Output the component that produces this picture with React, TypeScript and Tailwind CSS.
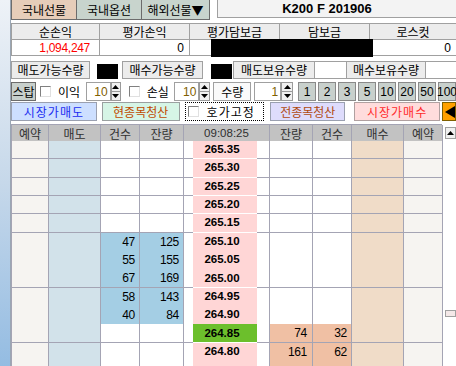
import React from 'react';

const ko = "font-['Noto_Sans_CJK_KR',sans-serif]";
const num = "font-['Liberation_Sans',Arial,sans-serif]";

type Row = { p: string; ac?: number; aq?: number; bq?: number; bc?: number; cur?: boolean; bidFill?: boolean };

const rows: Row[] = [
  { p: '265.35' },
  { p: '265.30' },
  { p: '265.25' },
  { p: '265.20' },
  { p: '265.15' },
  { p: '265.10', ac: 47, aq: 125 },
  { p: '265.05', ac: 55, aq: 155 },
  { p: '265.00', ac: 67, aq: 169 },
  { p: '264.95', ac: 58, aq: 143 },
  { p: '264.90', ac: 40, aq: 84 },
  { p: '264.85', bq: 74, bc: 32, cur: true },
  { p: '264.80', bq: 161, bc: 62 },
  { p: '', bidFill: true },
];

const Check = () => (
  <div className="w-[11px] h-[11px] bg-white border border-t-[#808080] border-l-[#808080] border-r-[#e0e0e0] border-b-[#e0e0e0]" />
);

const Spin = ({ w }: { w: string }) => (
  <div className={`${w} h-[19px] flex flex-col`}>
    <div className="flex-1 bg-[#f0f0f0] border border-[#9a9a9a] flex items-center justify-center">
      <svg width="7" height="4" viewBox="0 0 7 4"><path d="M3.5 0L7 4H0z" fill="#000" /></svg>
    </div>
    <div className="flex-1 bg-[#f0f0f0] border border-t-0 border-[#9a9a9a] flex items-center justify-center">
      <svg width="7" height="4" viewBox="0 0 7 4"><path d="M0 0h7L3.5 4z" fill="#000" /></svg>
    </div>
  </div>
);

const NumInput = ({ v, w }: { v: string; w: string }) => (
  <div className={`${w} h-[19px] bg-white border border-[#a0a0a0] flex items-center justify-end pr-[2px] text-[12px] text-[#806000] ${num}`}>
    {v}
  </div>
);

export default function App() {
  return (
    <div className="w-[456px] h-[366px] overflow-hidden flex bg-white">
      <div className="w-[11px] h-full bg-linear-to-b from-[#eef2f7] via-[#c6d8ea] to-[#94bce2] border-r border-[#9aa6b4]" />
      <div className="w-[445px] flex flex-col">
        {/* tabs */}
        <div className={`h-[20px] flex text-[12px] ${ko}`}>
          <div className="w-[66px] bg-[#e6cdb9] border-x border-b border-[#6c6c6c] flex items-center justify-center">국내선물</div>
          <div className="w-[65px] bg-[#c8d4cd] border-r border-b border-[#6c6c6c] flex items-center justify-center">국내옵션</div>
          <div className="w-[68px] bg-[#c8d4cd] border-r border-b border-[#6c6c6c] flex items-center justify-center">해외선물▼</div>
          <div className={`ml-[7px] flex-1 h-[18px] bg-[#f3f3f3] border-l border-b border-[#a0a0a0] flex items-center justify-center pr-[20px] text-[13px] font-bold ${num}`}>
            K200 F 201906
          </div>
        </div>

        {/* pnl table */}
        <div className={`mt-[3px] border-y border-[#a0a0a0] text-[12px] ${ko}`}>
          <div className="h-[16px] flex bg-[#ececec] border-b border-[#a0a0a0]">
            <div className="w-[89px] border-x border-[#a0a0a0] flex items-center justify-center">순손익</div>
            <div className="w-[90px] border-r border-[#a0a0a0] flex items-center justify-center">평가손익</div>
            <div className="w-[90px] border-r border-[#a0a0a0] flex items-center justify-center">평가담보금</div>
            <div className="w-[90px] border-r border-[#a0a0a0] flex items-center justify-center">담보금</div>
            <div className="flex-1 flex items-center justify-center">로스컷</div>
          </div>
          <div className={`h-[15px] flex bg-white ${num}`}>
            <div className="w-[89px] border-x border-[#a0a0a0] flex items-center justify-end pr-[9px] text-[#ff0000] tracking-[-0.3px]">1,094,247</div>
            <div className="w-[90px] border-r border-[#a0a0a0] flex items-center justify-end pr-[5px]">0</div>
            <div className="w-[21px]" />
            <div className="w-[162px] h-[18px] -mt-[1px] bg-black" />
            <div className="flex-1 flex items-center justify-end pr-[5px]">0</div>
          </div>
        </div>

        {/* qty labels */}
        <div className={`mt-[5px] h-[18px] flex items-stretch text-[12px] ${ko}`}>
          <div className="w-[79px] bg-[#ececec] border border-[#a0a0a0] flex items-center justify-center">매도가능수량</div>
          <div className="w-[32px] flex items-end pl-[7px]"><div className="w-[21px] h-[15px] bg-black" /></div>
          <div className="w-[81px] bg-[#ececec] border border-[#a0a0a0] flex items-center justify-center">매수가능수량</div>
          <div className="w-[30px] flex items-end pl-[8px]"><div className="w-[21px] h-[15px] bg-black" /></div>
          <div className="w-[82px] bg-[#ececec] border border-[#a0a0a0] flex items-center justify-center">매도보유수량</div>
          <div className="w-[31px] bg-white border-y border-[#a0a0a0]" />
          <div className="w-[80px] bg-[#ececec] border border-[#a0a0a0] flex items-center justify-center">매수보유수량</div>
          <div className="flex-1 bg-white border-y border-[#a0a0a0]" />
        </div>

        {/* stop row */}
        <div className={`mt-[3px] h-[19px] flex items-center text-[12px] ${ko}`}>
          <div className="w-[25px] h-[19px] bg-[#c8d0cc] border border-[#6c6c6c] flex items-center justify-center">스탑</div>
          <div className="ml-[4px]"><Check /></div>
          <div className="ml-[7px] w-[28px]">이익</div>
          <NumInput v="10" w="w-[25px]" />
          <Spin w="w-[10px]" />
          <div className="ml-[8px]"><Check /></div>
          <div className="ml-[7px] w-[27px]">손실</div>
          <NumInput v="10" w="w-[26px]" />
          <Spin w="w-[11px]" />
          <div className="ml-[3px] w-[38px] h-[19px] bg-[#fafafa] border border-[#a0a0a0] flex items-center justify-center">수량</div>
          <div className="ml-[3px]" />
          <NumInput v="1" w="w-[27px]" />
          <Spin w="w-[12px]" />
          <div className={`ml-[5px] flex gap-[2px] ${num}`}>
            {['1', '2', '3', '5', '10', '20', '50', '100'].map((b) => (
              <div key={b} className="w-[18px] h-[19px] shrink-0 bg-[#c8d0cc] border border-[#8a8a8a] flex items-center justify-center text-[12px]">
                {b}
              </div>
            ))}
          </div>
        </div>

        {/* order buttons */}
        <div className={`mt-[1px] h-[19px] flex items-stretch text-[12px] ${ko}`}>
          <div className="w-[86px] bg-[#cddfff] border border-[#9aa0b0] text-[#1a2cf0] flex items-center justify-center tracking-[1px]">시장가매도</div>
          <div className="ml-[5px] w-[78px] bg-[#d6f5e6] border border-[#9aa0a0] text-[#c04a00] flex items-center justify-center">현종목청산</div>
          <div className="ml-[5px] w-[80px] bg-white border border-dotted border-black flex items-center pl-[2px]">
            <Check />
            <span className="ml-[8px] tracking-[1px]">호가고정</span>
          </div>
          <div className="ml-[6px] w-[75px] bg-[#dedcfc] border border-[#9aa0b0] text-[#b04a10] flex items-center justify-center">전종목청산</div>
          <div className="ml-[9px] w-[86px] bg-[#ffdcdc] border border-[#b0a0a0] text-[#ff2a2a] flex items-center justify-center tracking-[1px]">시장가매수</div>
          <div className="ml-[2px] flex-1 bg-[#ffa000] border border-[#806000] flex items-center pl-[2px]">
            <svg width="10" height="12" viewBox="0 0 10 12"><path d="M0 6L10 0V12z" fill="#000" /></svg>
          </div>
        </div>

        {/* hoga grid */}
        <div className="mt-[3px] flex flex-1 min-h-0">
          <div className="w-[431px] border-l border-t border-[#a4a4b4]">
            <div className={`h-[16px] grid grid-cols-[37px_52px_39px_44px_9px_64px_13px_43px_39px_52px_39px] bg-[#c2c2c2] text-[12px] text-[#303030] ${ko}`}>
              <div className="border-r border-b border-[#a4a4b4] flex items-center justify-center">예약</div>
              <div className="border-r border-b border-[#a4a4b4] flex items-center justify-center">매도</div>
              <div className="border-r border-b border-[#a4a4b4] flex items-center justify-center">건수</div>
              <div className="border-r border-b border-[#a4a4b4] flex items-center justify-center">잔량</div>
              <div className={`col-span-3 border-r border-b border-[#a4a4b4] flex items-center justify-center text-[11.5px] ${num}`}>09:08:25</div>
              <div className="border-r border-b border-[#a4a4b4] flex items-center justify-center">잔량</div>
              <div className="border-r border-b border-[#a4a4b4] flex items-center justify-center">건수</div>
              <div className="border-r border-b border-[#a4a4b4] flex items-center justify-center">매수</div>
              <div className="border-r border-b border-[#a4a4b4] flex items-center justify-center">예약</div>
            </div>
            {rows.map((r, i) => {
              const bb = i === 9 ? 'border-b-black' : 'border-b-[#a4a4b4]';
              const askFill = r.ac !== undefined ? 'bg-[#a4cee4]' : 'bg-white';
              const bidFill = r.bq !== undefined || r.bidFill ? 'bg-[#f0c0a4]' : 'bg-white';
              const priceBg = r.cur ? 'bg-[#6cbf2c]' : 'bg-[#ffd6d6]';
              const priceB = i === 9 ? 'border-b-black' : 'border-b-white';
              return (
                <div key={i} className={`h-[18.33px] grid grid-cols-[37px_52px_39px_44px_9px_64px_13px_43px_39px_52px_39px] text-[12px] ${num}`}>
                  <div className={`bg-[#f6f4f1] border-r border-r-[#a4a4b4] border-b ${bb}`} />
                  <div className={`bg-[#d2e2ea] border-r border-r-[#a4a4b4] border-b ${bb}`} />
                  <div className={`${askFill} border-r border-r-[#a4a4b4] border-b ${bb} flex items-center justify-end pr-[4px] tracking-[-0.3px]`}>{r.ac}</div>
                  <div className={`${askFill} border-r border-r-[#a4a4b4] border-b ${bb} flex items-center justify-end pr-[4px] tracking-[-0.3px]`}>{r.aq}</div>
                  <div className={`bg-white border-b ${bb}`} />
                  <div className={`${priceBg} border-b ${priceB} flex items-center justify-center pr-[6px] text-[11.5px] font-bold text-black`}>{r.p}</div>
                  <div className={`bg-white border-r border-r-[#a4a4b4] border-b ${bb}`} />
                  <div className={`${bidFill} border-r border-r-[#a4a4b4] border-b ${bb} flex items-center justify-end pr-[5px] tracking-[-0.3px]`}>{r.bq}</div>
                  <div className={`${bidFill} border-r border-r-[#a4a4b4] border-b ${bb} flex items-center justify-end pr-[4px] tracking-[-0.3px]`}>{r.bc}</div>
                  <div className={`bg-[#f0dcc8] border-r border-r-[#a4a4b4] border-b ${bb}`} />
                  <div className={`bg-[#f6f4f1] border-r border-r-[#a4a4b4] border-b ${bb}`} />
                </div>
              );
            })}
          </div>
          <div className="w-[14px] flex flex-col items-start pl-[3px]">
            <div className="mt-[3px] w-[11px] h-[12px] bg-[#f0f0f0] border border-[#a0a0a0] flex items-center justify-center">
              <svg width="7" height="4" viewBox="0 0 7 4"><path d="M3.5 0L7 4H0z" fill="#000" /></svg>
            </div>
            <div className="mt-[171px] w-[11px] h-[7px] bg-[#f4e8e8] border border-[#a0a0a0]" />
          </div>
        </div>
      </div>
    </div>
  );
}
